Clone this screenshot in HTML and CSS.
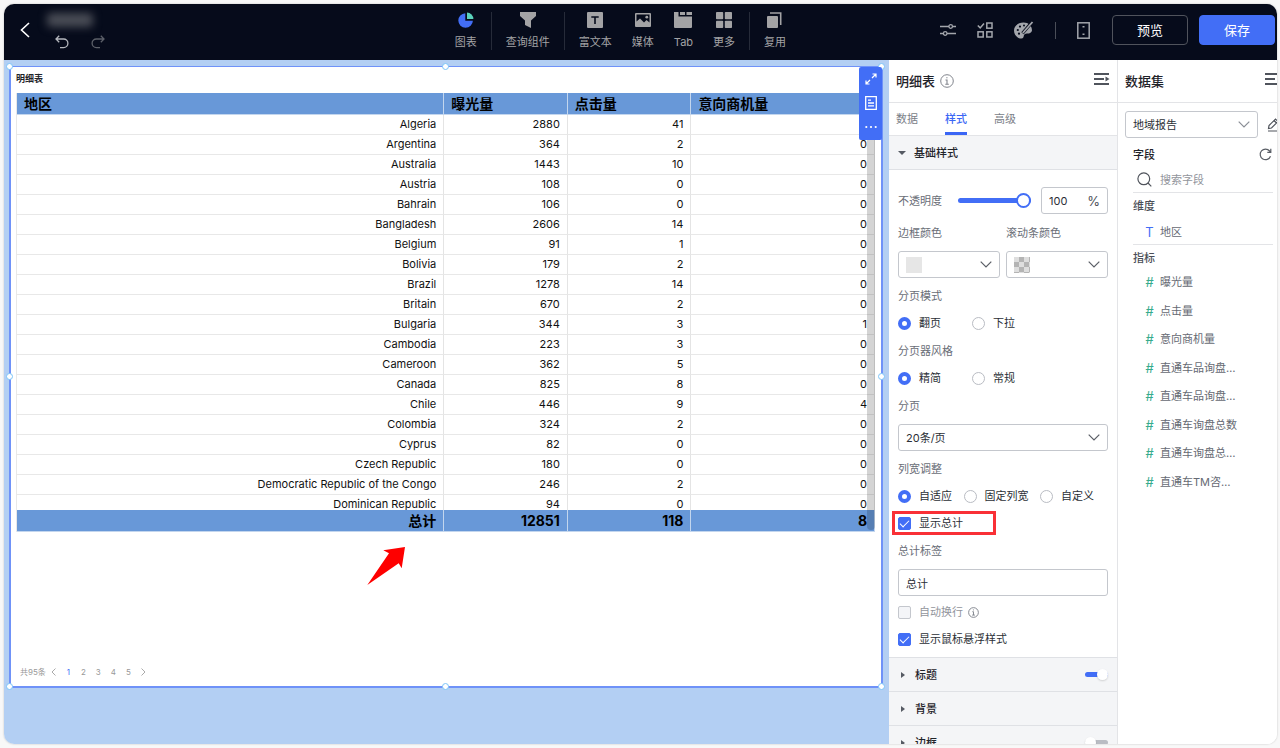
FILE: index.html
```html
<!DOCTYPE html>
<html lang="zh-CN">
<head>
<meta charset="utf-8">
<title>明细表</title>
<link rel="stylesheet" href="styles.css">
</head>
<body>
<div class="app">
  <header class="topbar">
    <div class="topbar-left">
      <button class="icon-btn" aria-label="返回"><svg width="10" height="16" viewBox="0 0 10 16" fill="none" stroke="#fff" stroke-width="1.6"><path d="M9 1 1.5 8 9 15"/></svg></button>
      <div class="doc">
        <div class="doc-name"></div>
        <div class="history">
          <button class="icon-btn" aria-label="撤销"><svg width="14" height="14" viewBox="0 0 14 14" fill="none" stroke="#b4b7bd" stroke-width="1.3"><path d="M4.2.8 1 4l3.2 3.2M1 4h7.6a4.3 4.3 0 0 1 0 8.6H5"/></svg></button>
          <button class="icon-btn" aria-label="重做"><svg width="14" height="14" viewBox="0 0 14 14" fill="none" stroke="#5c6069" stroke-width="1.3"><path d="M9.8.8 13 4 9.8 7.200M13 4H5.400a4.300 4.300 0 0 0 0 8.600H9"/></svg></button>
        </div>
      </div>
    </div>
    <nav class="tools">
      <button class="tool"><svg width="16" height="16" viewBox="0 0 16 16"><path d="M7.300 1.200A7.300 7.300 0 1 0 14.900 8.800H7.300z" fill="#426ef6"/><path d="M9 .5a6.600 6.600 0 0 1 6.400 6.500H9z" fill="#5ad2bb"/></svg>图表</button>
      <i class="bar"></i>
      <button class="tool"><svg width="18" height="16" viewBox="0 0 18 16" fill="#a3a3a5"><path d="M1 0h16v4l-5 4.500V16l-6-3V8.500L1 4z"/></svg>查询组件</button>
      <i class="bar"></i>
      <div class="tool-group">
        <button class="tool"><svg width="16" height="16" viewBox="0 0 16 16"><rect width="16" height="16" rx="1" fill="#a3a3a5"/><path d="M4.300 5h7.400M8 5v7" stroke="#060b1b" stroke-width="1.600"/></svg>富文本</button>
        <button class="tool"><svg width="16" height="16" viewBox="0 0 16 16" fill="#a3a3a5"><path fill-rule="evenodd" d="M1 1h14a1 1 0 0 1 1 1v12a1 1 0 0 1-1 1H1a1 1 0 0 1-1-1V2a1 1 0 0 1 1-1zm.500 1.500v7L5 6.500l4 4 2.500-2.500 3 2.500v-8z"/><circle cx="11.800" cy="5.200" r="1.400"/></svg>媒体</button>
        <button class="tool"><svg width="18" height="16" viewBox="0 0 18 16" fill="#a3a3a5"><path d="M0 0h4.500v4.500H18V15a1 1 0 0 1-1 1H1a1 1 0 0 1-1-1zM6 0h5v3H6zM12.500 0H18v3h-5.500z"/></svg>Tab</button>
        <button class="tool"><svg width="16" height="16" viewBox="0 0 16 16" fill="#a3a3a5"><rect width="7.200" height="7.200" rx=".8"/><rect x="8.800" width="7.200" height="7.200" rx=".8"/><rect y="8.800" width="7.200" height="7.200" rx=".8"/><rect x="8.800" y="8.800" width="7.200" height="7.200" rx=".8"/></svg>更多</button>
      </div>
      <i class="bar"></i>
      <button class="tool"><svg width="16" height="16" viewBox="0 0 16 16"><rect y="4" width="11" height="12" rx="1" fill="#a3a3a5"/><path d="M3 1h10.700v12" fill="none" stroke="#a3a3a5" stroke-width="1.600"/></svg>复用</button>
    </nav>
    <div class="topbar-right">
      <div class="actions">
        <button class="icon-btn" aria-label="设置"><svg width="16" height="16" viewBox="0 0 16 16" fill="none" stroke="#a3a6ac" stroke-width="1.300"><path d="M0 4.500h9M12.500 4.500H16M0 11.500h3.500M7 11.500h9"/><circle cx="10.700" cy="4.500" r="1.800"/><circle cx="5.200" cy="11.500" r="1.800"/></svg></button>
        <button class="icon-btn" aria-label="批量"><svg width="16" height="16" viewBox="0 0 16 16" fill="none" stroke="#a3a6ac" stroke-width="1.500"><path d="m.8 3.500 2.400 2.400L7 1.500"/><rect x="9.800" y="1" width="5.200" height="5.200"/><rect x="1" y="9.800" width="5.200" height="5.200"/><rect x="9.800" y="9.800" width="5.200" height="5.200"/></svg></button>
        <button class="icon-btn" aria-label="主题"><svg width="20" height="18" viewBox="0 0 20 18"><path d="M9.500 1.500C4 1.500 0 5 0 9.500s3.500 8 7.500 8c3 0 1.500-3.500 3.500-4.500 2.500-1 6 .5 7-3.500 0-4.500-3.500-8-8.500-8z" fill="#a3a6ac"/><g fill="#060b1b"><circle cx="3.800" cy="9" r="1.100"/><circle cx="6" cy="5.600" r="1.100"/><circle cx="10" cy="4.400" r="1"/><circle cx="5" cy="12.700" r="1.100"/></g><path d="m8.500 12.200 9-10.500" stroke="#060b1b" stroke-width="3.200"/><path d="m8.800 12 9.700-11" stroke="#a3a6ac" stroke-width="1.800"/></svg></button>
        <i class="bar bar-short"></i>
        <button class="icon-btn" aria-label="移动端"><svg width="13" height="17" viewBox="0 0 13 17"><rect x=".8" y=".8" width="11.400" height="15.400" fill="none" stroke="#a3a6ac" stroke-width="1.500"/><path d="M5.500 4h2v1.500h-2zM5.500 11.500h2V13h-2z" fill="#a3a6ac"/></svg></button>
      </div>
      <button class="btn">预览</button>
      <button class="btn btn-primary">保存</button>
    </div>
  </header>

  <div class="workspace">
    <main class="canvas">
      <section class="widget">
        <h2 class="widget-title">明细表</h2>
        <div class="table-wrap">
          <div class="table-clip">
            <table class="grid">
              <colgroup><col class="c1"><col class="c2"><col class="c2"><col></colgroup>
              <thead><tr><th>地区</th><th>曝光量</th><th>点击量</th><th>意向商机量</th></tr></thead>
              <tbody>
                <tr><td>Algeria</td><td>2880</td><td>41</td><td>0</td></tr>
                <tr><td>Argentina</td><td>364</td><td>2</td><td>0</td></tr>
                <tr><td>Australia</td><td>1443</td><td>10</td><td>0</td></tr>
                <tr><td>Austria</td><td>108</td><td>0</td><td>0</td></tr>
                <tr><td>Bahrain</td><td>106</td><td>0</td><td>0</td></tr>
                <tr><td>Bangladesh</td><td>2606</td><td>14</td><td>0</td></tr>
                <tr><td>Belgium</td><td>91</td><td>1</td><td>0</td></tr>
                <tr><td>Bolivia</td><td>179</td><td>2</td><td>0</td></tr>
                <tr><td>Brazil</td><td>1278</td><td>14</td><td>0</td></tr>
                <tr><td>Britain</td><td>670</td><td>2</td><td>0</td></tr>
                <tr><td>Bulgaria</td><td>344</td><td>3</td><td>1</td></tr>
                <tr><td>Cambodia</td><td>223</td><td>3</td><td>0</td></tr>
                <tr><td>Cameroon</td><td>362</td><td>5</td><td>0</td></tr>
                <tr><td>Canada</td><td>825</td><td>8</td><td>0</td></tr>
                <tr><td>Chile</td><td>446</td><td>9</td><td>4</td></tr>
                <tr><td>Colombia</td><td>324</td><td>2</td><td>0</td></tr>
                <tr><td>Cyprus</td><td>82</td><td>0</td><td>0</td></tr>
                <tr><td>Czech Republic</td><td>180</td><td>0</td><td>0</td></tr>
                <tr><td>Democratic Republic of the Congo</td><td>246</td><td>2</td><td>0</td></tr>
                <tr><td>Dominican Republic</td><td>94</td><td>0</td><td>0</td></tr>
              </tbody>
              <tfoot><tr><td>总计</td><td>12851</td><td>118</td><td>8</td></tr></tfoot>
            </table>
          </div>
          <div class="scroll-thumb"></div>
          <svg class="arrow" width="38" height="38" viewBox="0 0 38 38" fill="#fe0000"><path d="M.3 38 22 6.300 16.300 3.300 38 0 34.700 21.300 31.700 16.300z"/></svg>
        </div>
        <div class="pager">
          <span class="pager-total">共95条</span>
          <button aria-label="上一页"><svg width="5" height="8" viewBox="0 0 5 8" fill="none" stroke="#aaa"><path d="M4.500.5 1 4l3.500 3.500"/></svg></button>
          <button class="on">1</button><button>2</button><button>3</button><button>4</button><button>5</button>
          <button aria-label="下一页"><svg width="5" height="8" viewBox="0 0 5 8" fill="none" stroke="#aaa"><path d="M.5.5 4 4 .5 7.500"/></svg></button>
        </div>
        <i class="handle t l"></i><i class="handle t m"></i><i class="handle t r"></i>
        <i class="handle c l"></i><i class="handle c r"></i>
        <i class="handle b l"></i><i class="handle b m"></i><i class="handle b r"></i>
        <div class="widget-tools">
          <button aria-label="放大"><svg width="12" height="12" viewBox="0 0 12 12" fill="none" stroke="#fff" stroke-width="1.200"><path d="M7.500 1H11v3.500M11 1 7 5M4.500 11H1V7.500M1 11l4-4"/></svg></button>
          <button aria-label="查看数据"><svg width="12" height="14" viewBox="0 0 12 14" fill="none" stroke="#fff" stroke-width="1.300"><path d="M.7.7h10.600v12.600H.7zM3 4.200h3M3 7h6M3 9.800h6"/></svg></button>
          <button aria-label="更多操作"><svg width="12" height="4" viewBox="0 0 12 4" fill="#fff"><circle cx="1.300" cy="2" r="1.100"/><circle cx="6" cy="2" r="1.100"/><circle cx="10.700" cy="2" r="1.100"/></svg></button>
        </div>
      </section>
    </main>

    <aside class="panel">
      <div class="panel-head">
        <h2>明细表</h2>
        <svg width="14" height="14" viewBox="0 0 14 14" fill="none" stroke="#80848c"><circle cx="7" cy="7" r="6.300"/><path d="M5.500 6H7v4.300M5.300 10.300h3.500M6.300 3.700h1.200" stroke-width="1.100"/></svg>
        <button class="icon-btn push" aria-label="收起"><svg width="16" height="18" viewBox="0 0 16 18" fill="none" stroke="#50545c" stroke-width="2"><path d="M0 2h15M0 7h10M0 12h15"/><path d="m11.500 4.500 4 2.500-4 2.500z" fill="#50545c" stroke="none"/></svg></button>
      </div>
      <div class="tabs" role="tablist">
        <button role="tab">数据</button><button role="tab" class="on" aria-selected="true">样式</button><button role="tab">高级</button>
      </div>
      <button class="section open"><i class="tri"></i>基础样式</button>
      <div class="form">
        <div class="field inline">
          <label for="op">不透明度</label>
          <input id="op" class="slider" type="range" min="0" max="100" value="100">
          <span class="number"><input type="text" value="100" aria-label="不透明度数值"><span class="unit">%</span></span>
        </div>
        <div class="field pair tight">
          <div><span class="label">边框颜色</span><button class="color" aria-label="边框颜色"><i class="swatch"></i><svg class="chev" width="12" height="7" viewBox="0 0 12 7"><path d="m.7.7 5.300 5.300L11.300.7"/></svg></button></div>
          <div><span class="label">滚动条颜色</span><button class="color" aria-label="滚动条颜色"><i class="swatch checker"></i><svg class="chev" width="12" height="7" viewBox="0 0 12 7"><path d="m.7.7 5.300 5.300L11.300.7"/></svg></button></div>
        </div>
        <div class="field">
          <span class="label">分页模式</span>
          <div class="radios"><label class="wide"><input type="radio" name="mode" checked>翻页</label><label><input type="radio" name="mode">下拉</label></div>
        </div>
        <div class="field">
          <span class="label">分页器风格</span>
          <div class="radios"><label class="wide"><input type="radio" name="look" checked>精简</label><label><input type="radio" name="look">常规</label></div>
        </div>
        <div class="field tight">
          <label class="label" for="size">分页</label>
          <div class="select"><select id="size"><option>20条/页</option></select><svg class="chev" width="12" height="7" viewBox="0 0 12 7"><path d="m.7.7 5.300 5.300L11.300.7"/></svg></div>
        </div>
        <div class="field">
          <span class="label">列宽调整</span>
          <div class="radios spread"><label><input type="radio" name="col" checked>自适应</label><label><input type="radio" name="col">固定列宽</label><label><input type="radio" name="col">自定义</label></div>
        </div>
        <div class="check marked"><label><input type="checkbox" checked>显示总计</label></div>
        <div class="field">
          <label class="label" for="sum">总计标签</label>
          <input id="sum" class="text" type="text" value="总计">
        </div>
        <div class="check muted"><label><input type="checkbox" disabled>自动换行</label><svg width="11" height="11" viewBox="0 0 14 14" fill="none" stroke="#80848c" stroke-width="1.200"><circle cx="7" cy="7" r="6.200"/><path d="M5.500 6H7v4.300M5.300 10.300h3.500M6.300 3.700h1.200"/></svg></div>
        <div class="check"><label><input type="checkbox" checked>显示鼠标悬浮样式</label></div>
      </div>
      <div class="section"><i class="tri side"></i>标题<input class="switch" type="checkbox" role="switch" aria-label="标题" checked></div>
      <div class="section"><i class="tri side"></i>背景</div>
      <div class="section"><i class="tri side"></i>边框<input class="switch" type="checkbox" role="switch" aria-label="边框"></div>
    </aside>

    <aside class="dataset">
      <div class="panel-head">
        <h2>数据集</h2>
        <button class="icon-btn push bleed" aria-label="收起"><svg width="16" height="18" viewBox="0 0 16 18" fill="none" stroke="#50545c" stroke-width="2"><path d="M0 2h15M0 7h10M0 12h15"/></svg></button>
      </div>
      <div class="source">
        <div class="select"><select aria-label="数据集"><option>地域报告</option></select><svg class="chev thin" width="12" height="7" viewBox="0 0 12 7"><path d="m.7.7 5.300 5.300L11.300.7"/></svg></div>
        <button class="icon-btn" aria-label="编辑"><svg width="14" height="14" viewBox="0 0 14 14" fill="none" stroke="#50545c" stroke-width="1.200"><path d="m1.500 10.500.5-3L8.500 1 11 3.500 4.500 10zM7 2.500 9.500 5M1 13h12"/></svg></button>
      </div>
      <div class="fields-head"><h3>字段</h3><button class="icon-btn" aria-label="刷新"><svg width="13" height="13" viewBox="0 0 13 13" fill="none" stroke="#5a5e66" stroke-width="1.200"><path d="M11.500 8.200A5.300 5.300 0 1 1 10.600 3L11.500 4.200M11.800.8v3.600H8.300"/></svg></button></div>
      <div class="search"><svg width="15" height="15" viewBox="0 0 15 15" fill="none" stroke="#50545c" stroke-width="1.200"><circle cx="6.800" cy="6.800" r="5.900"/><path d="m11 11 3.300 3.300"/></svg><input type="text" placeholder="搜索字段" aria-label="搜索字段"></div>
      <h4>维度</h4>
      <ul class="dims"><li><b class="t">T</b>地区</li></ul>
      <h4 class="ruled">指标</h4>
      <ul class="metrics">
        <li><b>#</b>曝光量</li><li><b>#</b>点击量</li><li><b>#</b>意向商机量</li><li><b>#</b>直通车品询盘…</li><li><b>#</b>直通车品询盘…</li><li><b>#</b>直通车询盘总数</li><li><b>#</b>直通车询盘总…</li><li><b>#</b>直通车TM咨…</li>
      </ul>
    </aside>
  </div>
</div>
</body>
</html>
```
FILE: styles.css
```css
* { box-sizing: border-box; }
body {
  margin: 0;
  height: 100vh;
  padding: 4px 3px 4px 4px;
  background: #f8f8f8;
  color: #1f2329;
  font: 11px/16px Inter, "Noto Sans CJK SC", sans-serif;
}
h2, h3, h4, ul { margin: 0; padding: 0; list-style: none; }
button, input, select { font: inherit; color: inherit; margin: 0; }
button { border: 0; background: none; padding: 0; }
svg { display: block; flex: none; }
.icon-btn { display: flex; flex: none; }
.push { margin-left: auto; }

.app {
  height: 100%;
  display: flex;
  flex-direction: column;
  overflow: hidden;
  border-radius: 10px;
  background: #fff;
  box-shadow: 0 0 2px #bbb;
}

.topbar {
  flex: none;
  height: 56px;
  padding-bottom: 4px;
  display: grid;
  grid-template-columns: 45fr auto 49fr;
  align-items: center;
  background: #060b1b;
}
.topbar-left { display: flex; align-items: center; gap: 12px; padding-left: 16px; }
.doc { padding-top: 2px; }
.doc-name {
  width: 46px;
  height: 14px;
  border-radius: 4px;
  margin-left: 5px;
  background: #4a4d56;
  filter: blur(4px);
}
.history { display: flex; gap: 22px; margin-top: 8px; padding-left: 13px; }
.tools, .tool-group { display: flex; align-items: center; }
.tools { gap: 14px; padding-top: 2px; }
.tool-group { gap: 20px; }
.tool {
  display: flex;
  flex-direction: column;
  align-items: center;
  gap: 6px;
  color: #a3a3a5;
}
.bar { width: 1px; height: 38px; background: #262b39; }
.bar-short { height: 17px; background: #4a4e58; }
.topbar-right { display: flex; justify-content: flex-end; align-items: center; gap: 11px; padding-right: 2px; }
.actions { display: flex; align-items: center; gap: 21px; margin-right: 11px; }
.btn {
  width: 76px;
  height: 30px;
  border: 1px solid #50535c;
  border-radius: 4px;
  color: #fff;
  font-size: 13px;
}
.btn-primary { background: #426ef6; border-color: #426ef6; }

.workspace { flex: 1; min-height: 0; display: flex; }
.canvas { flex: 1; min-width: 0; display: flex; padding: 6px 6px 56px 5px; background: #b3cff3; }

.widget {
  position: relative;
  flex: 1;
  min-width: 0;
  display: flex;
  flex-direction: column;
  padding: 6px 6px 6px 5px;
  border: 2px solid #6f92f8;
  border-width: 1px 2px 2px;
  background: #fff;
}
.widget-title { font-size: 9px; line-height: 12px; }
.table-wrap { position: relative; margin-top: 8px; }
.table-clip { height: 439px; overflow: hidden; }
.grid {
  width: 100%;
  table-layout: fixed;
  border-collapse: separate;
  border-spacing: 0;
  border-left: 1px solid #e8e8e8;
  color: #111;
}
.c1 { width: 49.800%; }
.c2 { width: 14.400%; }
.grid th, .grid td { padding: 0 7px; border-right: 1px solid #e4e4e4; border-bottom: 1px solid #e8e8e8; }
.grid th { height: 22px; line-height: 21px; text-align: left; font-size: 14px; background: #6898d8; border-color: #c3d6ee; color: #000; }
.grid td { height: 20px; line-height: 19px; text-align: right; }
.grid tfoot td {
  position: sticky;
  bottom: 0;
  height: 22px;
  line-height: 21px;
  font-size: 14px;
  font-weight: 700;
  background: #6898d8;
  border-color: #c3d6ee;
  color: #000;
}
.scroll-thumb {
  position: absolute;
  top: 21px;
  right: 0;
  bottom: 2px;
  width: 8px;
  border-radius: 4px;
  background: rgba(0, 0, 0, .17);
}
.arrow { position: absolute; left: 351px; top: 454px; }

.pager { display: flex; align-items: center; margin-top: auto; padding-left: 4px; font-size: 8px; line-height: 16px; color: #999; }
.pager button { width: 15px; display: flex; justify-content: center; }
.pager .on { color: #426ef6; }

.handle {
  position: absolute;
  width: 7px;
  height: 7px;
  border: 1px solid #7cc4f8;
  border-radius: 50%;
  background: #fff;
}
.t { top: -4px; }
.b { bottom: -4px; }
.c { top: calc(50% - 4px); }
.l { left: -5px; }
.m { left: calc(50% - 4px); }
.r { right: -4px; }

.widget-tools {
  position: absolute;
  top: 0;
  right: -1px;
  width: 23px;
  display: flex;
  flex-direction: column;
  padding-bottom: 1px;
  border-radius: 2px;
  background: #426ef6;
}
.widget-tools button { height: 24px; display: flex; align-items: center; justify-content: center; }

.panel, .dataset { flex: none; overflow: hidden; background: #fff; }
.panel { width: 229px; border-right: 1px solid #e3e4e7; }
.panel-head { display: flex; align-items: center; gap: 5px; height: 43px; padding: 0 7px; border-bottom: 1px solid #e3e4e7; }
.panel-head h2 { font-size: 13px; font-weight: 500; }
.tabs { display: flex; gap: 27px; padding: 0 7px; height: 33px; border-bottom: 1px solid #e3e4e7; color: #7a7e87; }
.tabs .on { color: #3b66f5; font-weight: 500; border-bottom: 3px solid #3b66f5; padding-top: 3px; }

.section {
  display: flex;
  align-items: center;
  gap: 8px;
  width: 100%;
  height: 34px;
  padding: 0 9px;
  border-bottom: 1px solid #dfe1e5;
  background: #f4f5f7;
  font-weight: 500;
}
.tri { border: 4px solid transparent; border-top: 4px solid #555a63; border-bottom: 0; }
.tri.side { border: 3px solid transparent; border-left: 4px solid #555a63; border-right: 0; margin: 0 2px 0 3px; }

.form { padding: 17px 9px 9px; border-bottom: 1px solid #dfe1e5; color: #2b2f36; }
.field { display: flex; flex-direction: column; gap: 10px; margin-bottom: 11px; }
.field.tight { margin-bottom: 10px; }
.field.inline { flex-direction: row; align-items: center; justify-content: space-between; color: #6a6e77; }
.field.pair { flex-direction: row; gap: 6px; }
.pair > div { flex: 1; display: flex; flex-direction: column; gap: 10px; }
.label { color: #6a6e77; }

.slider { appearance: none; width: 73px; height: 16px; margin-left: 6px; background: none; }
.slider::-webkit-slider-runnable-track { height: 5px; border-radius: 3px; background: #426ef6; }
.slider::-webkit-slider-thumb {
  appearance: none;
  width: 15px;
  height: 15px;
  margin-top: -5px;
  border: 2px solid #426ef6;
  border-radius: 50%;
  background: #fff;
}
.number, .color, .text, .select select {
  height: 27px;
  border: 1px solid #c4c7cd;
  border-radius: 3px;
  background: #fff;
}
.number { width: 67px; display: flex; align-items: center; padding: 0 7px; color: #4b4f57; }
.number input { flex: 1; min-width: 0; padding: 0; border: 0; outline: 0; color: #2b2f36; }
.unit { font-size: 13px; }
.color { display: flex; align-items: center; justify-content: space-between; padding: 0 7px; }
.swatch { width: 16px; height: 16px; background: #e6e6e6; }
.checker { background: conic-gradient(#b4b4b4 25%, #dedede 0 50%, #b4b4b4 0 75%, #dedede 0) 0 0 / 10px 10px; }
.chev { fill: none; stroke: #5a5e66; stroke-width: 1.200; }
.chev.thin { stroke: #8a8e96; }
.text { width: 100%; padding: 0 7px; }
.select { position: relative; }
.select select { display: block; appearance: none; width: 100%; padding: 0 7px; color: #2b2f36; }
.select .chev { position: absolute; right: 8px; top: 10px; pointer-events: none; }

.radios { display: flex; height: 18px; }
.radios.spread { justify-content: space-between; padding-right: 14px; }
.radios label, .check label { display: flex; align-items: center; gap: 8px; }
.radios .wide { width: 74px; }
input[type="radio"] {
  appearance: none;
  width: 13px;
  height: 13px;
  border: 1px solid #b9bcc3;
  border-radius: 50%;
}
input[type="radio"]:checked { border: 4px solid #426ef6; }
.check { position: relative; display: flex; align-items: center; gap: 5px; height: 18px; margin-bottom: 9px; }
.check:last-child { margin-bottom: 0; }
.check.marked { margin: -2px 0 11px; }
.check.marked::after {
  content: "";
  position: absolute;
  left: -6px;
  top: -3px;
  width: 104px;
  height: 24px;
  border: 3px solid #f93036;
  pointer-events: none;
}
.check.marked::after { box-sizing: border-box; }
.check.muted { margin-top: -4px; color: #92959c; }
.check input {
  appearance: none;
  width: 13px;
  height: 13px;
  border: 1px solid #c4c7cd;
  border-radius: 2px;
  background: #f4f5f8;
  display: grid;
  place-items: center;
}
.check input:checked { background: #426ef6; border-color: #426ef6; }
.check input:checked::before {
  content: "";
  width: 8px;
  height: 4px;
  border: solid #fff;
  border-width: 0 0 1px 1px;
  transform: translateY(-1px) rotate(-45deg);
}
.switch { appearance: none; position: relative; width: 23px; height: 11px; margin-left: auto; }
.switch::before { content: ""; position: absolute; inset: 3px 0; border-radius: 3px; background: #b9bcc3; }
.switch::after {
  content: "";
  position: absolute;
  top: 0;
  left: 0;
  width: 11px;
  height: 11px;
  border-radius: 50%;
  background: #fff;
  box-shadow: 0 1px 2px rgba(0, 0, 0, .15);
}
.switch:checked::before { background: #426ef6; }
.switch:checked::after { left: 12px; }

.dataset { width: 159px; }
.dataset .panel-head { padding-right: 0; }
.bleed { margin-right: -4px; }
.source { display: flex; align-items: center; gap: 9px; padding: 8px 0 0 7px; margin-right: -4px; }
.source .select { flex: 1; }
.fields-head { display: flex; align-items: center; justify-content: space-between; height: 33px; padding: 0 5px 0 15px; }
.fields-head h3 { font-size: 11px; font-weight: 500; }
.search { display: flex; align-items: center; gap: 8px; height: 26px; margin: -4px 4px 0 15px; padding-left: 4px; border-bottom: 1px solid #e3e4e7; }
.search input { flex: 1; min-width: 0; border: 0; padding: 0; outline: 0; }
.search input::placeholder { color: #92959c; opacity: 1; }
.dataset h4 { height: 26px; line-height: 26px; margin: 0 4px 0 15px; font-size: 11px; font-weight: 500; color: #4b4f57; }
.dataset h4.ruled { border-top: 1px solid #e3e4e7; }
.dims, .metrics { padding-left: 26px; color: #666a73; }
.dims { height: 25px; display: flex; flex-direction: column; }
.metrics { height: 228px; display: flex; flex-direction: column; margin-top: -2px; }
.dataset li { flex: 1; display: flex; align-items: center; gap: 5px; }
.dataset b { width: 11px; text-align: center; font-size: 13px; font-weight: 400; color: #36ab8d; }
.dataset b.t { color: #426ef6; }
```
